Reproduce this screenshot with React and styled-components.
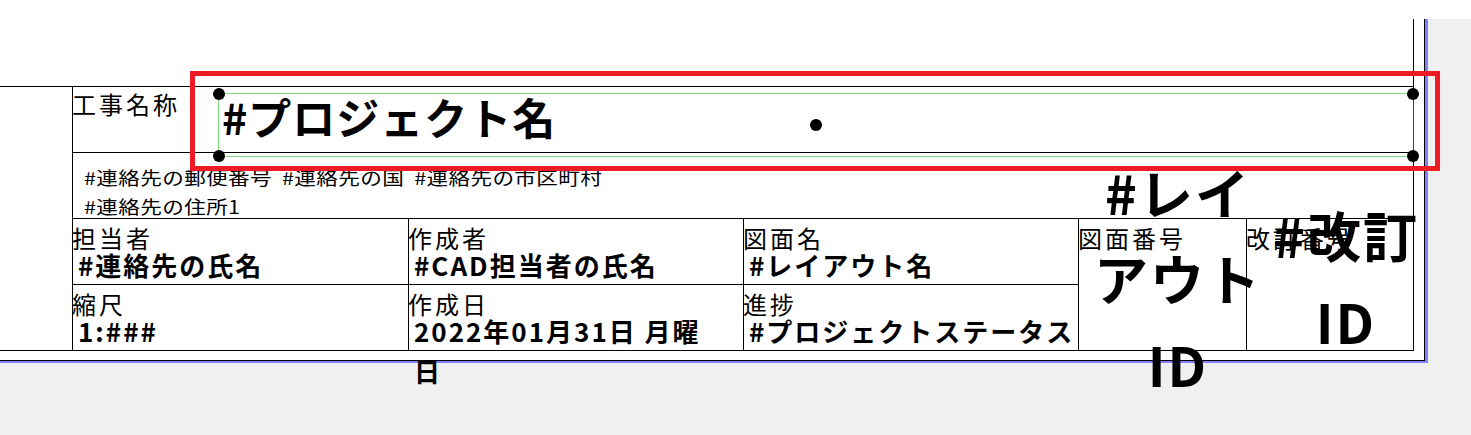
import React from "react";
import styled, { createGlobalStyle } from "styled-components";

const GlobalStyle = createGlobalStyle`
  * { box-sizing: border-box; }
  html, body { margin: 0; padding: 0; }
  body {
    background: #f0f0f0;
    color: #000;
    font-family: "Noto Sans CJK JP", "Noto Sans", sans-serif;
    overflow: hidden;
  }
`;

const Viewport = styled.div`
  position: relative;
  width: 1471px;
  height: 435px;
`;

const TopBand = styled.div`
  height: 19px;
  background: #fff;
`;

// paper with its blue edge on the right and bottom
const Sheet = styled.div`
  width: 1428px;
  border-right: 3px solid #8080ff;
  border-bottom: 2px solid #8080ff;
`;

const Paper = styled.div`
  background: #fff;
  border-right: 1px solid #000;
  border-bottom: 1px solid #000;
  padding: 0 10px 9px 0;
`;

const Frame = styled.div`
  border-right: 1px solid #000;
  border-bottom: 1px solid #000;
  padding-top: 67px;
`;

const TitleBlock = styled.div`
  display: grid;
  grid-template-columns: 72px 1fr;
  border-top: 1px solid #000;
`;

const Main = styled.div`
  display: flex;
  flex-direction: column;
  border-left: 1px solid #000;
`;

const NameRow = styled.div`
  position: relative;
  height: 66px;
  border-bottom: 1px solid #000;
  padding-top: 3px;
`;

const AddressRow = styled.div`
  height: 66px;
  border-bottom: 1px solid #000;
  padding: 10px 0 0 11px;
`;

const AddressLine = styled.div`
  font-size: 18px;
  line-height: 29px;
  letter-spacing: 0.3px;
  word-spacing: 4px;
  white-space: nowrap;
  transform: scaleX(1.2);
  transform-origin: left center;
`;

const InfoGrid = styled.div`
  display: grid;
  grid-template-columns: 336px 335px 335px 168px 1fr;
  grid-template-rows: 66px 65px;
`;

const Cell = styled.div`
  position: relative;
  padding-top: 5px;
  border-right: ${(p) => (p.$last ? "none" : "1px solid #000")};
  border-bottom: ${(p) => (p.$top ? "1px solid #000" : "none")};
  grid-row: ${(p) => (p.$span ? "span 2" : "auto")};
`;

const Label = styled.div`
  font-size: 24px;
  line-height: 28px;
  letter-spacing: 3px;
  margin-left: -1px;
  white-space: nowrap;
`;

const Value = styled.div`
  font-size: 26px;
  font-weight: 700;
  line-height: 40px;
  letter-spacing: 2px;
  margin-top: -7px;
  padding-left: 5px;
  white-space: ${(p) => (p.$wrapAt ? "normal" : "nowrap")};
  max-width: ${(p) => (p.$wrapAt ? `${p.$wrapAt}px` : "none")};
`;

const BigText = styled.div`
  position: absolute;
  left: 12px;
  top: 50%;
  width: 174px;
  transform: translateY(-50%);
  margin-top: -7px;
  font-size: 54px;
  font-weight: 700;
  line-height: 86px;
  letter-spacing: 2px;
  text-align: center;
`;

// selected text field with its grips
const Field = styled.div`
  position: absolute;
  left: 145px;
  top: 6px;
  width: 1196px;
  height: 64px;
  border: 1px solid #80dc80;
  border-right-color: #1f5a1f;
  padding-left: 3px;
`;

const ProjectName = styled.div`
  font-size: 43px;
  font-weight: 700;
  line-height: 44px;
  letter-spacing: 1px;
  white-space: nowrap;
`;

const Grip = styled.span`
  position: absolute;
  left: ${(p) => p.$x}%;
  top: ${(p) => p.$y}%;
  width: 12px;
  height: 12px;
  border-radius: 50%;
  background: #000;
  transform: translate(-50%, -50%);
`;

const Highlight = styled.div`
  position: absolute;
  left: 190px;
  top: 71px;
  width: 1250px;
  height: 100px;
  border: 5px solid #ed1c24;
  pointer-events: none;
`;

const grips = [
  [0, 0],
  [0, 100],
  [100, 0],
  [100, 100],
  [50, 50],
];

export default function App() {
  return (
    <Viewport>
      <GlobalStyle />
      <TopBand />
      <Sheet>
        <Paper>
          <Frame>
            <TitleBlock>
              <div />
              <Main>
                <NameRow>
                  <Label>工事名称</Label>
                  <Field>
                    <ProjectName>#プロジェクト名</ProjectName>
                    {grips.map(([x, y]) => (
                      <Grip key={`${x}-${y}`} $x={x} $y={y} />
                    ))}
                  </Field>
                </NameRow>
                <AddressRow>
                  <AddressLine>#連絡先の郵便番号 #連絡先の国 #連絡先の市区町村</AddressLine>
                  <AddressLine>#連絡先の住所1</AddressLine>
                </AddressRow>
                <InfoGrid>
                  <Cell $top>
                    <Label>担当者</Label>
                    <Value>#連絡先の氏名</Value>
                  </Cell>
                  <Cell $top>
                    <Label>作成者</Label>
                    <Value>#CAD担当者の氏名</Value>
                  </Cell>
                  <Cell $top>
                    <Label>図面名</Label>
                    <Value>#レイアウト名</Value>
                  </Cell>
                  <Cell $span>
                    <Label>図面番号</Label>
                    <BigText>#レイアウトID</BigText>
                  </Cell>
                  <Cell $span $last>
                    <Label>改訂番号</Label>
                    <BigText>#改訂ID</BigText>
                  </Cell>
                  <Cell>
                    <Label>縮尺</Label>
                    <Value>1:###</Value>
                  </Cell>
                  <Cell>
                    <Label>作成日</Label>
                    <Value $wrapAt={305}>2022年01月31日 月曜日</Value>
                  </Cell>
                  <Cell>
                    <Label>進捗</Label>
                    <Value>#プロジェクトステータス</Value>
                  </Cell>
                </InfoGrid>
              </Main>
            </TitleBlock>
          </Frame>
        </Paper>
      </Sheet>
      <Highlight />
    </Viewport>
  );
}
